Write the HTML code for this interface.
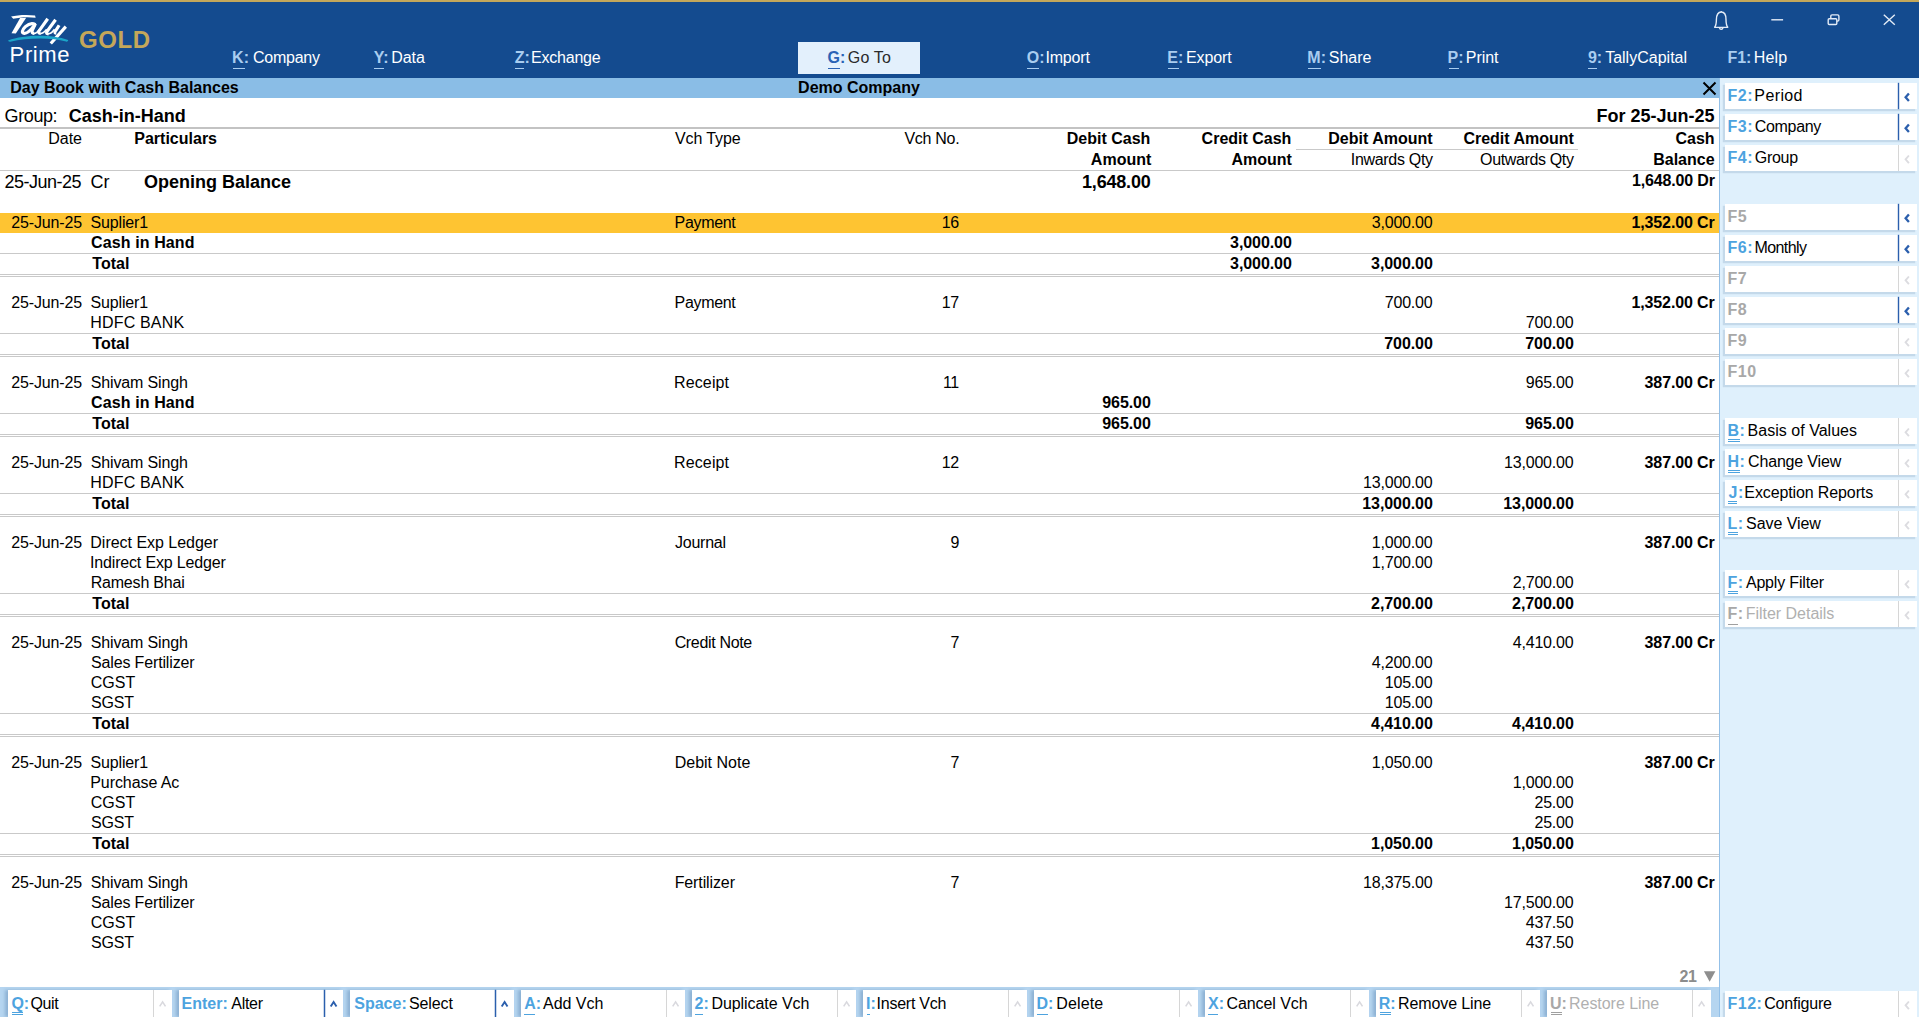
<!DOCTYPE html><html><head><meta charset="utf-8"><title>TallyPrime</title><style>
    *{box-sizing:border-box;margin:0;padding:0}
    html,body{width:1919px;height:1017px;overflow:hidden;background:#fff}
    body{font-family:"Liberation Sans",sans-serif;font-size:16px;color:#000;position:relative}
    .a{position:absolute;white-space:pre;line-height:20px}
    .b{font-weight:bold}
    .r{text-align:right}
    .t{letter-spacing:-0.12px}
    .n{letter-spacing:-0.18px}
    .b.n{letter-spacing:-0.06px}
    .bl{letter-spacing:-0.15px}
    .hl{position:absolute;left:0;height:1px;background:#c9c9c9}
    #top{position:absolute;left:0;top:0;width:1919px;height:78px;background:#144b8f}
    #gold{position:absolute;left:0;top:0;width:1919px;height:2px;background:#c4a75a}
    .mi{position:absolute;top:48px;line-height:20px;color:#fff;white-space:pre;font-size:16px}
    .mi b{color:#a9cdf0}
    .mi .ml{letter-spacing:-0.2px}
    .mi u{position:absolute;left:1px;top:20px;height:1px;background:#a9cdf0;display:block}
    #title{position:absolute;left:0;top:78px;width:1719px;height:20px;background:#8abde6}
    #rp{position:absolute;left:1719px;top:78px;width:200px;height:939px;background:#dff0fc;border-left:1px solid #93c0e8}
    .rb{position:absolute;left:1725px;width:192px;height:26px;background:#fff;box-shadow:-2px 2px 1px rgba(140,168,196,.32);line-height:26px;white-space:pre;font-size:16px}
    .rb b{color:#4da3df;letter-spacing:0.5px}
    .rb .k{position:absolute;top:0.4px}
    .rb .k i{font-style:normal;margin-left:2.6px}
    .rb .sep{position:absolute;left:173px;top:0;width:1px;height:26px;background:#d6d6d6}
    .rb.on .sep{background:#2b5fad;width:1px;left:173px;box-shadow:0 0 0 0.2px #2b5fad}
    .rb .ch{position:absolute;left:177px;top:0;width:14px;height:26px}
    .rb.dis{color:#b0b0b0}
    .rb.dis b{color:#a8a8a8}
    #bb{position:absolute;left:0;top:987px;width:1719px;height:30px;background:#b5d5f0}
    .bt{position:absolute;top:990px;width:164px;height:27px;background:#fff;line-height:26px;white-space:pre;font-size:16px;box-shadow:-3px 0 3px rgba(110,150,190,.55)}
    .bt b{color:#4da3df}
    .bt .k{position:absolute;top:1.2px}
    .bt .sep{position:absolute;left:145px;top:0;width:1px;height:27px;background:#d6d6d6}
    .bt.on .sep{background:#2b5fad;width:1px;left:145px;box-shadow:0 0 0 0.25px #2b5fad}
    .bt.dis{color:#b0b0b0}
    .bt.dis b{color:#a8a8a8}
    .ul{position:absolute;height:1px;background:#4da3df}
    </style></head><body>
<div id="top"></div><div id="gold"></div>
<svg style="position:absolute;left:0;top:0" width="160" height="78" viewBox="0 0 160 78">
    <g transform="translate(4,10) scale(0.03932)" fill="#fff" stroke="none">
    <path d="M180,165 C330,125 600,110 790,140 L805,195 C620,170 400,180 235,225 Z"/>
    <path d="M410,205 L565,195 L300,600 L190,590 Z"/>
    <g fill="none" stroke="#fff" stroke-width="80" stroke-linecap="butt" stroke-linejoin="round">
    <path d="M800,372 C730,330 630,345 545,425 C455,510 440,590 515,595 C590,598 690,500 775,385"/>
    <path d="M800,345 L716,525 C700,575 725,598 770,592"/>
    <path d="M1112,222 L892,530 C868,572 885,598 930,597"/>
    <path d="M1312,248 L1092,548 C1068,588 1088,608 1130,606"/>
    <path d="M1402,388 L1300,548 C1290,575 1300,590 1330,590"/>
    <path d="M1572,424 L1190,852"/>
    <g stroke-width="40"><path d="M760,596 C820,590 870,545 905,495"/>
    <path d="M920,600 C990,598 1040,550 1085,490"/>
    <path d="M1120,608 C1190,604 1240,555 1285,490"/></g>
    </g>
    <path fill="#1ba5c9" d="M105,775 C500,630 1200,610 1630,765 C1640,790 1600,815 1580,800 C1200,690 600,700 160,805 C130,810 100,795 105,775 Z"/>
    </g>
    </svg>
<div class="a" style="left:9.6px;top:42.3px;font-size:22px;line-height:26px;color:#fff;letter-spacing:0.62px">Prime</div>
<div class="a b" style="left:79px;top:26.3px;font-size:24px;line-height:28px;color:#c4a75a;letter-spacing:0.55px">GOLD</div>
<div class="mi" style="left:232.1px;color:#a9cdf0"><b style="color:#a9cdf0">K:</b><u style="width:12px;background:#a9cdf0;left:1.0px"></u></div>
<div class="mi" style="left:253.0px;letter-spacing:-0.246px;color:#fff">Company</div>
<div class="mi" style="left:373.75px;color:#a9cdf0"><b style="color:#a9cdf0">Y:</b><u style="width:10px;background:#a9cdf0;left:0.25px"></u></div>
<div class="mi" style="left:391.25px;letter-spacing:-0.049px;color:#fff">Data</div>
<div class="mi" style="left:514.75px;color:#a9cdf0"><b style="color:#a9cdf0">Z:</b><u style="width:9px;background:#a9cdf0;left:0.25px"></u></div>
<div class="mi" style="left:531.05px;letter-spacing:-0.224px;color:#fff">Exchange</div>
<div style="position:absolute;left:798px;top:42px;width:122px;height:32px;background:#e3f0fc"></div>
<div class="mi" style="left:827.5px;color:#2a62b5"><b style="color:#2a62b5">G:</b><u style="width:12px;background:#2a62b5;left:0.5px"></u></div>
<div class="mi" style="left:847.75px;letter-spacing:0.203px;color:#2a2a2a">Go To</div>
<div class="mi" style="left:1026.8px;color:#a9cdf0"><b style="color:#a9cdf0">O:</b><u style="width:12px;background:#a9cdf0;left:0.5px"></u></div>
<div class="mi" style="left:1045.45px;letter-spacing:-0.17px;color:#fff">Import</div>
<div class="mi" style="left:1167.3px;color:#a9cdf0"><b style="color:#a9cdf0">E:</b><u style="width:10.5px;background:#a9cdf0;left:1.0px"></u></div>
<div class="mi" style="left:1186.05px;letter-spacing:-0.129px;color:#fff">Export</div>
<div class="mi" style="left:1307.3px;color:#a9cdf0"><b style="color:#a9cdf0">M:</b><u style="width:12.5px;background:#a9cdf0;left:1.0px"></u></div>
<div class="mi" style="left:1328.8px;letter-spacing:-0.037px;color:#fff">Share</div>
<div class="mi" style="left:1447.6px;color:#a9cdf0"><b style="color:#a9cdf0">P:</b><u style="width:10px;background:#a9cdf0;left:1.0px"></u></div>
<div class="mi" style="left:1465.75px;letter-spacing:-0.026px;color:#fff">Print</div>
<div class="mi" style="left:1587.9px;color:#a9cdf0"><b style="color:#a9cdf0">9:</b><u style="width:9px;background:#a9cdf0;left:0.5px"></u></div>
<div class="mi" style="left:1605.15px;letter-spacing:0.008px;color:#fff">TallyCapital</div>
<div class="mi" style="left:1727.4px;color:#a9cdf0"><b style="color:#a9cdf0">F1:</b><u style="width:0px;background:#a9cdf0;left:1.0px"></u></div>
<div class="mi" style="left:1753.65px;letter-spacing:0.197px;color:#fff">Help</div>
<svg style="position:absolute;left:1700px;top:0" width="219" height="40" viewBox="1700 0 219 40" fill="none" stroke="#e4ecf7" stroke-width="1.4">
    <path d="M1714.1,27.4 L1728.3,27.4 M1714.5,27.3 C1716.3,25.6 1716.4,23.5 1716.4,19.6 C1716.4,14.8 1718.2,12 1721.2,12 C1724.2,12 1726,14.8 1726,19.6 C1726,23.5 1726.1,25.6 1727.9,27.3 M1719.5,27.8 C1719.8,29.8 1722.6,29.8 1722.9,27.8 M1721.2,12 L1721.2,11"/>
    <path d="M1771.3,19.8 L1783.1,19.8"/>
    <rect x="1828.2" y="18.7" width="8.6" height="5.8" rx="1"/>
    <path d="M1830.8,18.4 L1830.8,16.2 C1830.8,15.3 1831.2,14.9 1832.1,14.9 L1837.6,14.9 C1838.5,14.9 1838.9,15.3 1838.9,16.2 L1838.9,19.8 C1838.9,20.7 1838.5,21.1 1837.6,21.1 L1837,21.1"/>
    <path d="M1883.8,14.8 L1894.8,24.8 M1894.8,14.8 L1883.8,24.8"/>
    </svg>
<div id="title"></div>
<div class="a b" style="left:10.2px;top:77.5px">Day Book with Cash Balances</div>
<div class="a b" style="left:798.1px;top:77.5px">Demo Company</div>
<svg style="position:absolute;left:1700px;top:80px" width="19" height="18" viewBox="1700 80 19 18"><path d="M1703.5,82.5 L1715.5,94.5 M1715.5,82.5 L1703.5,94.5" stroke="#000" stroke-width="2" fill="none"/></svg>
<div class="a" style="left:4.6px;top:106.06px;font-size:18px;letter-spacing:-0.4px">Group:</div>
<div class="a b" style="left:68.7px;top:106.06px;font-size:18px">Cash-in-Hand</div>
<div class="a b r" style="left:1400px;width:314.6px;top:106.06px;font-size:18px">For 25-Jun-25</div>
<div class="hl" style="top:127px;height:2px;width:1719px;background:#c3c3c3"></div>
<div class="a r" style="left:-218px;width:300px;top:129.2px;">Date</div>
<div class="a b" style="left:134.3px;top:129.2px;">Particulars</div>
<div class="a t" style="left:675px;top:129.2px;">Vch Type</div>
<div class="a r" style="left:659.3px;width:300px;top:129.2px;letter-spacing:-0.3px">Vch No.</div>
<div class="a r b" style="left:850.4000000000001px;width:300px;top:129.2px;">Debit Cash</div>
<div class="a r b" style="left:991.4000000000001px;width:300px;top:129.2px;">Credit Cash</div>
<div class="a r b" style="left:1132.6px;width:300px;top:129.2px;">Debit Amount</div>
<div class="a r b" style="left:1273.9px;width:300px;top:129.2px;">Credit Amount</div>
<div class="a r b" style="left:1414.6px;width:300px;top:129.2px;">Cash</div>
<div class="a r b" style="left:851.3px;width:300px;top:150.2px;">Amount</div>
<div class="a r b" style="left:991.9000000000001px;width:300px;top:150.2px;">Amount</div>
<div class="a r" style="left:1132.7px;width:300px;top:150.2px;letter-spacing:-0.32px">Inwards Qty</div>
<div class="a r" style="left:1273.6px;width:300px;top:150.2px;letter-spacing:-0.36px">Outwards Qty</div>
<div class="a r b" style="left:1414.6px;width:300px;top:150.2px;">Balance</div>
<div class="hl" style="top:149px;left:1296px;width:282px"></div>
<div class="hl" style="top:170px;width:1719px"></div>
<div class="a" style="left:4.5px;top:172.06px;font-size:18px;letter-spacing:-0.5px">25-Jun-25</div>
<div class="a" style="left:90.4px;top:172.06px;font-size:18px">Cr</div>
<div class="a b" style="left:144.1px;top:172.06px;font-size:18px">Opening Balance</div>
<div class="a r b" style="left:850.5px;width:300px;top:172.06px;font-size:18px;letter-spacing:-0.2px">1,648.00</div>
<div class="a r b" style="left:1414.8px;width:300px;top:171px;letter-spacing:-0.15px">1,648.00 Dr</div>
<div style="position:absolute;left:0;top:213px;width:1719px;height:20px;background:#fec432"></div>
<div class="a" style="left:11.25px;top:212.9px;letter-spacing:-0.156px">25-Jun-25</div>
<div class="a" style="left:90.6px;top:212.9px;letter-spacing:-0.165px">Suplier1</div>
<div class="a" style="left:674.55px;top:212.9px;letter-spacing:-0.324px">Payment</div>
<div class="a" style="left:941.74px;top:212.9px;letter-spacing:-0.388px">16</div>
<div class="a" style="left:1371.79px;top:212.9px;letter-spacing:-0.21px">3,000.00</div>
<div class="a b" style="left:1631.47px;top:212.9px;letter-spacing:-0.125px">1,352.00 Cr</div>
<div class="a b" style="left:91.1px;top:232.9px;letter-spacing:0.108px">Cash in Hand</div>
<div class="a b" style="left:1230.06px;top:232.9px;letter-spacing:-0.07px">3,000.00</div>
<div class="hl" style="top:253px;width:1719px"></div>
<div class="a b" style="left:92.3px;top:253.9px;letter-spacing:0.029px">Total</div>
<div class="a b" style="left:1230.06px;top:253.9px;letter-spacing:-0.07px">3,000.00</div>
<div class="a b" style="left:1371.06px;top:253.9px;letter-spacing:-0.07px">3,000.00</div>
<div class="hl" style="top:274px;width:1719px"></div>
<div class="hl" style="top:276px;width:1719px"></div>
<div class="a" style="left:11.25px;top:292.9px;letter-spacing:-0.156px">25-Jun-25</div>
<div class="a" style="left:90.6px;top:292.9px;letter-spacing:-0.165px">Suplier1</div>
<div class="a" style="left:674.55px;top:292.9px;letter-spacing:-0.324px">Payment</div>
<div class="a" style="left:941.74px;top:292.9px;letter-spacing:-0.388px">17</div>
<div class="a" style="left:1384.81px;top:292.9px;letter-spacing:-0.229px">700.00</div>
<div class="a b" style="left:1631.47px;top:292.9px;letter-spacing:-0.125px">1,352.00 Cr</div>
<div class="a" style="left:90.35px;top:312.9px;letter-spacing:0.159px">HDFC BANK</div>
<div class="a" style="left:1525.81px;top:312.9px;letter-spacing:-0.229px">700.00</div>
<div class="hl" style="top:333px;width:1719px"></div>
<div class="a b" style="left:92.3px;top:333.9px;letter-spacing:0.029px">Total</div>
<div class="a b" style="left:1384.29px;top:333.9px;letter-spacing:-0.076px">700.00</div>
<div class="a b" style="left:1525.29px;top:333.9px;letter-spacing:-0.076px">700.00</div>
<div class="hl" style="top:354px;width:1719px"></div>
<div class="hl" style="top:356px;width:1719px"></div>
<div class="a" style="left:11.25px;top:372.9px;letter-spacing:-0.156px">25-Jun-25</div>
<div class="a" style="left:90.7px;top:372.9px;letter-spacing:-0.138px">Shivam Singh</div>
<div class="a" style="left:674.05px;top:372.9px;letter-spacing:0.124px">Receipt</div>
<div class="a" style="left:942.9px;top:372.9px;letter-spacing:-0.359px">11</div>
<div class="a" style="left:1525.81px;top:372.9px;letter-spacing:-0.229px">965.00</div>
<div class="a b" style="left:1644.62px;top:372.9px;letter-spacing:-0.133px">387.00 Cr</div>
<div class="a b" style="left:91.1px;top:392.9px;letter-spacing:0.108px">Cash in Hand</div>
<div class="a b" style="left:1102.29px;top:392.9px;letter-spacing:-0.076px">965.00</div>
<div class="hl" style="top:413px;width:1719px"></div>
<div class="a b" style="left:92.3px;top:413.9px;letter-spacing:0.029px">Total</div>
<div class="a b" style="left:1102.29px;top:413.9px;letter-spacing:-0.076px">965.00</div>
<div class="a b" style="left:1525.29px;top:413.9px;letter-spacing:-0.076px">965.00</div>
<div class="hl" style="top:434px;width:1719px"></div>
<div class="hl" style="top:436px;width:1719px"></div>
<div class="a" style="left:11.25px;top:452.9px;letter-spacing:-0.156px">25-Jun-25</div>
<div class="a" style="left:90.7px;top:452.9px;letter-spacing:-0.138px">Shivam Singh</div>
<div class="a" style="left:674.05px;top:452.9px;letter-spacing:0.124px">Receipt</div>
<div class="a" style="left:941.74px;top:452.9px;letter-spacing:-0.388px">12</div>
<div class="a" style="left:1504.09px;top:452.9px;letter-spacing:-0.209px">13,000.00</div>
<div class="a b" style="left:1644.62px;top:452.9px;letter-spacing:-0.133px">387.00 Cr</div>
<div class="a" style="left:90.35px;top:472.9px;letter-spacing:0.159px">HDFC BANK</div>
<div class="a" style="left:1363.09px;top:472.9px;letter-spacing:-0.209px">13,000.00</div>
<div class="hl" style="top:493px;width:1719px"></div>
<div class="a b" style="left:92.3px;top:493.9px;letter-spacing:0.029px">Total</div>
<div class="a b" style="left:1362.23px;top:493.9px;letter-spacing:-0.07px">13,000.00</div>
<div class="a b" style="left:1503.23px;top:493.9px;letter-spacing:-0.07px">13,000.00</div>
<div class="hl" style="top:514px;width:1719px"></div>
<div class="hl" style="top:516px;width:1719px"></div>
<div class="a" style="left:11.25px;top:532.9px;letter-spacing:-0.156px">25-Jun-25</div>
<div class="a" style="left:90.35px;top:532.9px;letter-spacing:-0.027px">Direct Exp Ledger</div>
<div class="a" style="left:675.05px;top:532.9px;letter-spacing:-0.245px">Journal</div>
<div class="a" style="left:950.43px;top:532.9px;letter-spacing:0px">9</div>
<div class="a" style="left:1371.78px;top:532.9px;letter-spacing:-0.209px">1,000.00</div>
<div class="a b" style="left:1644.62px;top:532.9px;letter-spacing:-0.133px">387.00 Cr</div>
<div class="a" style="left:90.0px;top:552.9px;letter-spacing:-0.165px">Indirect Exp Ledger</div>
<div class="a" style="left:1371.78px;top:552.9px;letter-spacing:-0.209px">1,700.00</div>
<div class="a" style="left:90.65px;top:572.9px;letter-spacing:-0.189px">Ramesh Bhai</div>
<div class="a" style="left:1512.78px;top:572.9px;letter-spacing:-0.21px">2,700.00</div>
<div class="hl" style="top:593px;width:1719px"></div>
<div class="a b" style="left:92.3px;top:593.9px;letter-spacing:0.029px">Total</div>
<div class="a b" style="left:1371.06px;top:593.9px;letter-spacing:-0.07px">2,700.00</div>
<div class="a b" style="left:1512.06px;top:593.9px;letter-spacing:-0.07px">2,700.00</div>
<div class="hl" style="top:614px;width:1719px"></div>
<div class="hl" style="top:616px;width:1719px"></div>
<div class="a" style="left:11.25px;top:632.9px;letter-spacing:-0.156px">25-Jun-25</div>
<div class="a" style="left:90.7px;top:632.9px;letter-spacing:-0.138px">Shivam Singh</div>
<div class="a" style="left:674.65px;top:632.9px;letter-spacing:-0.332px">Credit Note</div>
<div class="a" style="left:950.43px;top:632.9px;letter-spacing:0px">7</div>
<div class="a" style="left:1512.8px;top:632.9px;letter-spacing:-0.211px">4,410.00</div>
<div class="a b" style="left:1644.62px;top:632.9px;letter-spacing:-0.133px">387.00 Cr</div>
<div class="a" style="left:91.0px;top:652.9px;letter-spacing:-0.148px">Sales Fertilizer</div>
<div class="a" style="left:1371.8px;top:652.9px;letter-spacing:-0.211px">4,200.00</div>
<div class="a" style="left:90.75px;top:672.9px;letter-spacing:0.026px">CGST</div>
<div class="a" style="left:1384.8px;top:672.9px;letter-spacing:-0.228px">105.00</div>
<div class="a" style="left:91.0px;top:692.9px;letter-spacing:-0.18px">SGST</div>
<div class="a" style="left:1384.8px;top:692.9px;letter-spacing:-0.228px">105.00</div>
<div class="hl" style="top:713px;width:1719px"></div>
<div class="a b" style="left:92.3px;top:713.9px;letter-spacing:0.029px">Total</div>
<div class="a b" style="left:1371.06px;top:713.9px;letter-spacing:-0.07px">4,410.00</div>
<div class="a b" style="left:1512.06px;top:713.9px;letter-spacing:-0.07px">4,410.00</div>
<div class="hl" style="top:734px;width:1719px"></div>
<div class="hl" style="top:736px;width:1719px"></div>
<div class="a" style="left:11.25px;top:752.9px;letter-spacing:-0.156px">25-Jun-25</div>
<div class="a" style="left:90.6px;top:752.9px;letter-spacing:-0.165px">Suplier1</div>
<div class="a" style="left:674.65px;top:752.9px;letter-spacing:0.017px">Debit Note</div>
<div class="a" style="left:950.43px;top:752.9px;letter-spacing:0px">7</div>
<div class="a" style="left:1371.78px;top:752.9px;letter-spacing:-0.209px">1,050.00</div>
<div class="a b" style="left:1644.62px;top:752.9px;letter-spacing:-0.133px">387.00 Cr</div>
<div class="a" style="left:90.25px;top:772.9px;letter-spacing:-0.071px">Purchase Ac</div>
<div class="a" style="left:1512.78px;top:772.9px;letter-spacing:-0.209px">1,000.00</div>
<div class="a" style="left:90.75px;top:792.9px;letter-spacing:0.026px">CGST</div>
<div class="a" style="left:1534.49px;top:792.9px;letter-spacing:-0.233px">25.00</div>
<div class="a" style="left:91.0px;top:812.9px;letter-spacing:-0.18px">SGST</div>
<div class="a" style="left:1534.49px;top:812.9px;letter-spacing:-0.233px">25.00</div>
<div class="hl" style="top:833px;width:1719px"></div>
<div class="a b" style="left:92.3px;top:833.9px;letter-spacing:0.029px">Total</div>
<div class="a b" style="left:1371.05px;top:833.9px;letter-spacing:-0.069px">1,050.00</div>
<div class="a b" style="left:1512.05px;top:833.9px;letter-spacing:-0.069px">1,050.00</div>
<div class="hl" style="top:854px;width:1719px"></div>
<div class="hl" style="top:856px;width:1719px"></div>
<div class="a" style="left:11.25px;top:872.9px;letter-spacing:-0.156px">25-Jun-25</div>
<div class="a" style="left:90.7px;top:872.9px;letter-spacing:-0.138px">Shivam Singh</div>
<div class="a" style="left:674.65px;top:872.9px;letter-spacing:-0.112px">Fertilizer</div>
<div class="a" style="left:950.43px;top:872.9px;letter-spacing:0px">7</div>
<div class="a" style="left:1363.09px;top:872.9px;letter-spacing:-0.209px">18,375.00</div>
<div class="a b" style="left:1644.62px;top:872.9px;letter-spacing:-0.133px">387.00 Cr</div>
<div class="a" style="left:91.0px;top:892.9px;letter-spacing:-0.148px">Sales Fertilizer</div>
<div class="a" style="left:1504.09px;top:892.9px;letter-spacing:-0.209px">17,500.00</div>
<div class="a" style="left:90.75px;top:912.9px;letter-spacing:0.026px">CGST</div>
<div class="a" style="left:1525.82px;top:912.9px;letter-spacing:-0.232px">437.50</div>
<div class="a" style="left:91.0px;top:932.9px;letter-spacing:-0.18px">SGST</div>
<div class="a" style="left:1525.82px;top:932.9px;letter-spacing:-0.232px">437.50</div>
<div class="a b" style="left:1679.5px;top:967.1px;color:#8c8c8c;letter-spacing:-0.498px">21</div>
<svg style="position:absolute;left:1702px;top:970px" width="16" height="14"><path d="M1.9,1.2 L13.4,1.2 L7.65,11.8 Z" fill="#8e8e8e"/></svg>
<div id="rp"></div>
<div class="rb on" style="top:83px;height:26px"><span class="k" style="left:2.5px"><b>F2:</b></span><span class="k" style="left:29.35px;letter-spacing:0.38px">Period</span><span class="sep" style="height:26px"></span><svg class="ch" viewBox="0 0 14 26"><path d="M6.9,10.5 L3.6,14.3 L6.9,18.1" fill="none" stroke="#2b5fad" stroke-width="2.3"/></svg></div>
<div class="rb on" style="top:114px;height:26px"><span class="k" style="left:2.5px"><b>F3:</b></span><span class="k" style="left:29.85px;letter-spacing:-0.338px">Company</span><span class="sep" style="height:26px"></span><svg class="ch" viewBox="0 0 14 26"><path d="M6.9,10.5 L3.6,14.3 L6.9,18.1" fill="none" stroke="#2b5fad" stroke-width="2.3"/></svg></div>
<div class="rb" style="top:145px;height:26px"><span class="k" style="left:2.5px"><b>F4:</b></span><span class="k" style="left:29.85px;letter-spacing:-0.318px">Group</span><span class="sep" style="height:26px"></span><svg class="ch" viewBox="0 0 14 26"><path d="M6.9,10.5 L3.6,14.3 L6.9,18.1" fill="none" stroke="#dcdce0" stroke-width="1.9"/></svg></div>
<div class="rb on dis" style="top:204px;height:26px"><span class="k" style="left:2.5px"><b>F5</b></span><span class="sep" style="height:26px"></span><svg class="ch" viewBox="0 0 14 26"><path d="M6.9,10.5 L3.6,14.3 L6.9,18.1" fill="none" stroke="#2b5fad" stroke-width="2.3"/></svg></div>
<div class="rb on" style="top:235px;height:26px"><span class="k" style="left:2.5px"><b>F6:</b></span><span class="k" style="left:29.55px;letter-spacing:-0.612px">Monthly</span><span class="sep" style="height:26px"></span><svg class="ch" viewBox="0 0 14 26"><path d="M6.9,10.5 L3.6,14.3 L6.9,18.1" fill="none" stroke="#2b5fad" stroke-width="2.3"/></svg></div>
<div class="rb dis" style="top:266px;height:26px"><span class="k" style="left:2.5px"><b>F7</b></span><span class="sep" style="height:26px"></span><svg class="ch" viewBox="0 0 14 26"><path d="M6.9,10.5 L3.6,14.3 L6.9,18.1" fill="none" stroke="#dcdce0" stroke-width="1.9"/></svg></div>
<div class="rb on dis" style="top:297px;height:26px"><span class="k" style="left:2.5px"><b>F8</b></span><span class="sep" style="height:26px"></span><svg class="ch" viewBox="0 0 14 26"><path d="M6.9,10.5 L3.6,14.3 L6.9,18.1" fill="none" stroke="#2b5fad" stroke-width="2.3"/></svg></div>
<div class="rb dis" style="top:328px;height:26px"><span class="k" style="left:2.5px"><b>F9</b></span><span class="sep" style="height:26px"></span><svg class="ch" viewBox="0 0 14 26"><path d="M6.9,10.5 L3.6,14.3 L6.9,18.1" fill="none" stroke="#dcdce0" stroke-width="1.9"/></svg></div>
<div class="rb dis" style="top:359px;height:26px"><span class="k" style="left:2.5px"><b>F10</b></span><span class="sep" style="height:26px"></span><svg class="ch" viewBox="0 0 14 26"><path d="M6.9,10.5 L3.6,14.3 L6.9,18.1" fill="none" stroke="#dcdce0" stroke-width="1.9"/></svg></div>
<div class="rb" style="top:418px;height:26px"><span class="k" style="left:2.5px"><b>B:</b></span><span class="k" style="left:22.55px;letter-spacing:0.025px">Basis of Values</span><span class="ul" style="left:3px;top:21px;width:12px;background:#4da3df"></span><span class="ul" style="left:3px;top:23px;width:12px;background:#4da3df"></span><span class="sep" style="height:26px"></span><svg class="ch" viewBox="0 0 14 26"><path d="M6.9,10.5 L3.6,14.3 L6.9,18.1" fill="none" stroke="#dcdce0" stroke-width="1.9"/></svg></div>
<div class="rb" style="top:449px;height:26px"><span class="k" style="left:2.5px"><b>H:</b></span><span class="k" style="left:23.05px;letter-spacing:-0.173px">Change View</span><span class="ul" style="left:3px;top:21px;width:12px;background:#4da3df"></span><span class="ul" style="left:3px;top:23px;width:12px;background:#4da3df"></span><span class="sep" style="height:26px"></span><svg class="ch" viewBox="0 0 14 26"><path d="M6.9,10.5 L3.6,14.3 L6.9,18.1" fill="none" stroke="#dcdce0" stroke-width="1.9"/></svg></div>
<div class="rb" style="top:480px;height:26px"><span class="k" style="left:3.5px"><b>J:</b></span><span class="k" style="left:19.35px;letter-spacing:-0.118px">Exception Reports</span><span class="ul" style="left:3px;top:21px;width:9px;background:#4da3df"></span><span class="ul" style="left:3px;top:23px;width:9px;background:#4da3df"></span><span class="sep" style="height:26px"></span><svg class="ch" viewBox="0 0 14 26"><path d="M6.9,10.5 L3.6,14.3 L6.9,18.1" fill="none" stroke="#dcdce0" stroke-width="1.9"/></svg></div>
<div class="rb" style="top:511px;height:26px"><span class="k" style="left:2.5px"><b>L:</b></span><span class="k" style="left:21.1px;letter-spacing:-0.075px">Save View</span><span class="ul" style="left:3px;top:21px;width:10px;background:#4da3df"></span><span class="ul" style="left:3px;top:23px;width:10px;background:#4da3df"></span><span class="sep" style="height:26px"></span><svg class="ch" viewBox="0 0 14 26"><path d="M6.9,10.5 L3.6,14.3 L6.9,18.1" fill="none" stroke="#dcdce0" stroke-width="1.9"/></svg></div>
<div class="rb" style="top:570px;height:26px"><span class="k" style="left:2.5px"><b>F:</b></span><span class="k" style="left:20.9px;letter-spacing:-0.168px">Apply Filter</span><span class="ul" style="left:3px;top:21px;width:10px;background:#4da3df"></span><span class="ul" style="left:3px;top:23px;width:10px;background:#4da3df"></span><span class="sep" style="height:26px"></span><svg class="ch" viewBox="0 0 14 26"><path d="M6.9,10.5 L3.6,14.3 L6.9,18.1" fill="none" stroke="#dcdce0" stroke-width="1.9"/></svg></div>
<div class="rb dis" style="top:601px;height:26px"><span class="k" style="left:2.5px"><b>F:</b></span><span class="k" style="left:20.75px;letter-spacing:-0.027px">Filter Details</span><span class="ul" style="left:3px;top:23px;width:10px;background:#a0a0a0"></span><span class="sep" style="height:26px"></span><svg class="ch" viewBox="0 0 14 26"><path d="M6.9,10.5 L3.6,14.3 L6.9,18.1" fill="none" stroke="#dcdce0" stroke-width="1.9"/></svg></div>
<div class="rb" style="top:991px;height:26px"><span class="k" style="left:2.5px"><b>F12:</b></span><span class="k" style="left:39.15px;letter-spacing:-0.197px">Configure</span><span class="sep" style="height:26px"></span><svg class="ch" viewBox="0 0 14 26"><path d="M6.9,10.5 L3.6,14.3 L6.9,18.1" fill="none" stroke="#dcdce0" stroke-width="1.9"/></svg></div>
<div id="bb"></div>
<div class="bt" style="left:8px"><span class="k" style="left:3.4px"><b>Q:</b></span><span class="k" style="left:22.5px;letter-spacing:-0.383px">Quit</span><span class="ul" style="left:3.6px;top:22px;width:11.5px;background:#4da3df"></span><span class="ul" style="left:3.6px;top:24px;width:11.5px;background:#4da3df"></span><span class="sep"></span><svg style="position:absolute;left:147px;top:0" width="17" height="27"><path d="M4.7,16.4 L7.6,11.9 L10.5,16.4" fill="none" stroke="#d9d9de" stroke-width="1.6"/></svg></div>
<div class="bt on" style="left:179px"><span class="k" style="left:2.5px"><b>Enter:</b></span><span class="k" style="left:52.25px;letter-spacing:-0.268px">Alter</span><span class="sep"></span><svg style="position:absolute;left:147px;top:0" width="17" height="27"><path d="M4.7,16.4 L7.6,11.9 L10.5,16.4" fill="none" stroke="#2b5fad" stroke-width="1.9"/></svg></div>
<div class="bt on" style="left:350px"><span class="k" style="left:4.25px"><b>Space:</b></span><span class="k" style="left:59.0px;letter-spacing:-0.105px">Select</span><span class="sep"></span><svg style="position:absolute;left:147px;top:0" width="17" height="27"><path d="M4.7,16.4 L7.6,11.9 L10.5,16.4" fill="none" stroke="#2b5fad" stroke-width="1.9"/></svg></div>
<div class="bt" style="left:521px"><span class="k" style="left:3.25px"><b>A:</b></span><span class="k" style="left:22px;letter-spacing:-0.014px">Add Vch</span><span class="ul" style="left:3.2px;top:24px;width:10.5px;background:#4da3df"></span><span class="sep"></span><svg style="position:absolute;left:147px;top:0" width="17" height="27"><path d="M4.7,16.4 L7.6,11.9 L10.5,16.4" fill="none" stroke="#d9d9de" stroke-width="1.6"/></svg></div>
<div class="bt" style="left:692px"><span class="k" style="left:2.5px"><b>2:</b></span><span class="k" style="left:19.45px;letter-spacing:-0.064px">Duplicate Vch</span><span class="ul" style="left:2.7px;top:24px;width:8.5px;background:#4da3df"></span><span class="sep"></span><svg style="position:absolute;left:147px;top:0" width="17" height="27"><path d="M4.7,16.4 L7.6,11.9 L10.5,16.4" fill="none" stroke="#d9d9de" stroke-width="1.6"/></svg></div>
<div class="bt" style="left:863px"><span class="k" style="left:3px"><b>I:</b></span><span class="k" style="left:13.55px;letter-spacing:-0.243px">Insert Vch</span><span class="ul" style="left:3.7px;top:24px;width:3.5px;background:#4da3df"></span><span class="sep"></span><svg style="position:absolute;left:147px;top:0" width="17" height="27"><path d="M4.7,16.4 L7.6,11.9 L10.5,16.4" fill="none" stroke="#d9d9de" stroke-width="1.6"/></svg></div>
<div class="bt" style="left:1034px"><span class="k" style="left:2.5px"><b>D:</b></span><span class="k" style="left:22.25px;letter-spacing:0.13px">Delete</span><span class="ul" style="left:3.2px;top:24px;width:11px;background:#4da3df"></span><span class="sep"></span><svg style="position:absolute;left:147px;top:0" width="17" height="27"><path d="M4.7,16.4 L7.6,11.9 L10.5,16.4" fill="none" stroke="#d9d9de" stroke-width="1.6"/></svg></div>
<div class="bt" style="left:1205px"><span class="k" style="left:3px"><b>X:</b></span><span class="k" style="left:21.45px;letter-spacing:-0.064px">Cancel Vch</span><span class="ul" style="left:2.7px;top:24px;width:10.5px;background:#4da3df"></span><span class="sep"></span><svg style="position:absolute;left:147px;top:0" width="17" height="27"><path d="M4.7,16.4 L7.6,11.9 L10.5,16.4" fill="none" stroke="#d9d9de" stroke-width="1.6"/></svg></div>
<div class="bt" style="left:1376px"><span class="k" style="left:2.8px"><b>R:</b></span><span class="k" style="left:22.05px;letter-spacing:-0.117px">Remove Line</span><span class="ul" style="left:3.5px;top:22px;width:11px;background:#4da3df"></span><span class="ul" style="left:3.5px;top:24px;width:11px;background:#4da3df"></span><span class="sep"></span><svg style="position:absolute;left:147px;top:0" width="17" height="27"><path d="M4.7,16.4 L7.6,11.9 L10.5,16.4" fill="none" stroke="#d9d9de" stroke-width="1.6"/></svg></div>
<div class="bt dis" style="left:1547px"><span class="k" style="left:3.05px"><b>U:</b></span><span class="k" style="left:22.05px;letter-spacing:-0.047px">Restore Line</span><span class="ul" style="left:3.5px;top:22px;width:11px;background:#a0a0a0"></span><span class="ul" style="left:3.5px;top:24px;width:11px;background:#a0a0a0"></span><span class="sep"></span><svg style="position:absolute;left:147px;top:0" width="17" height="27"><path d="M4.7,16.4 L7.6,11.9 L10.5,16.4" fill="none" stroke="#d9d9de" stroke-width="1.6"/></svg></div>
</body></html>
